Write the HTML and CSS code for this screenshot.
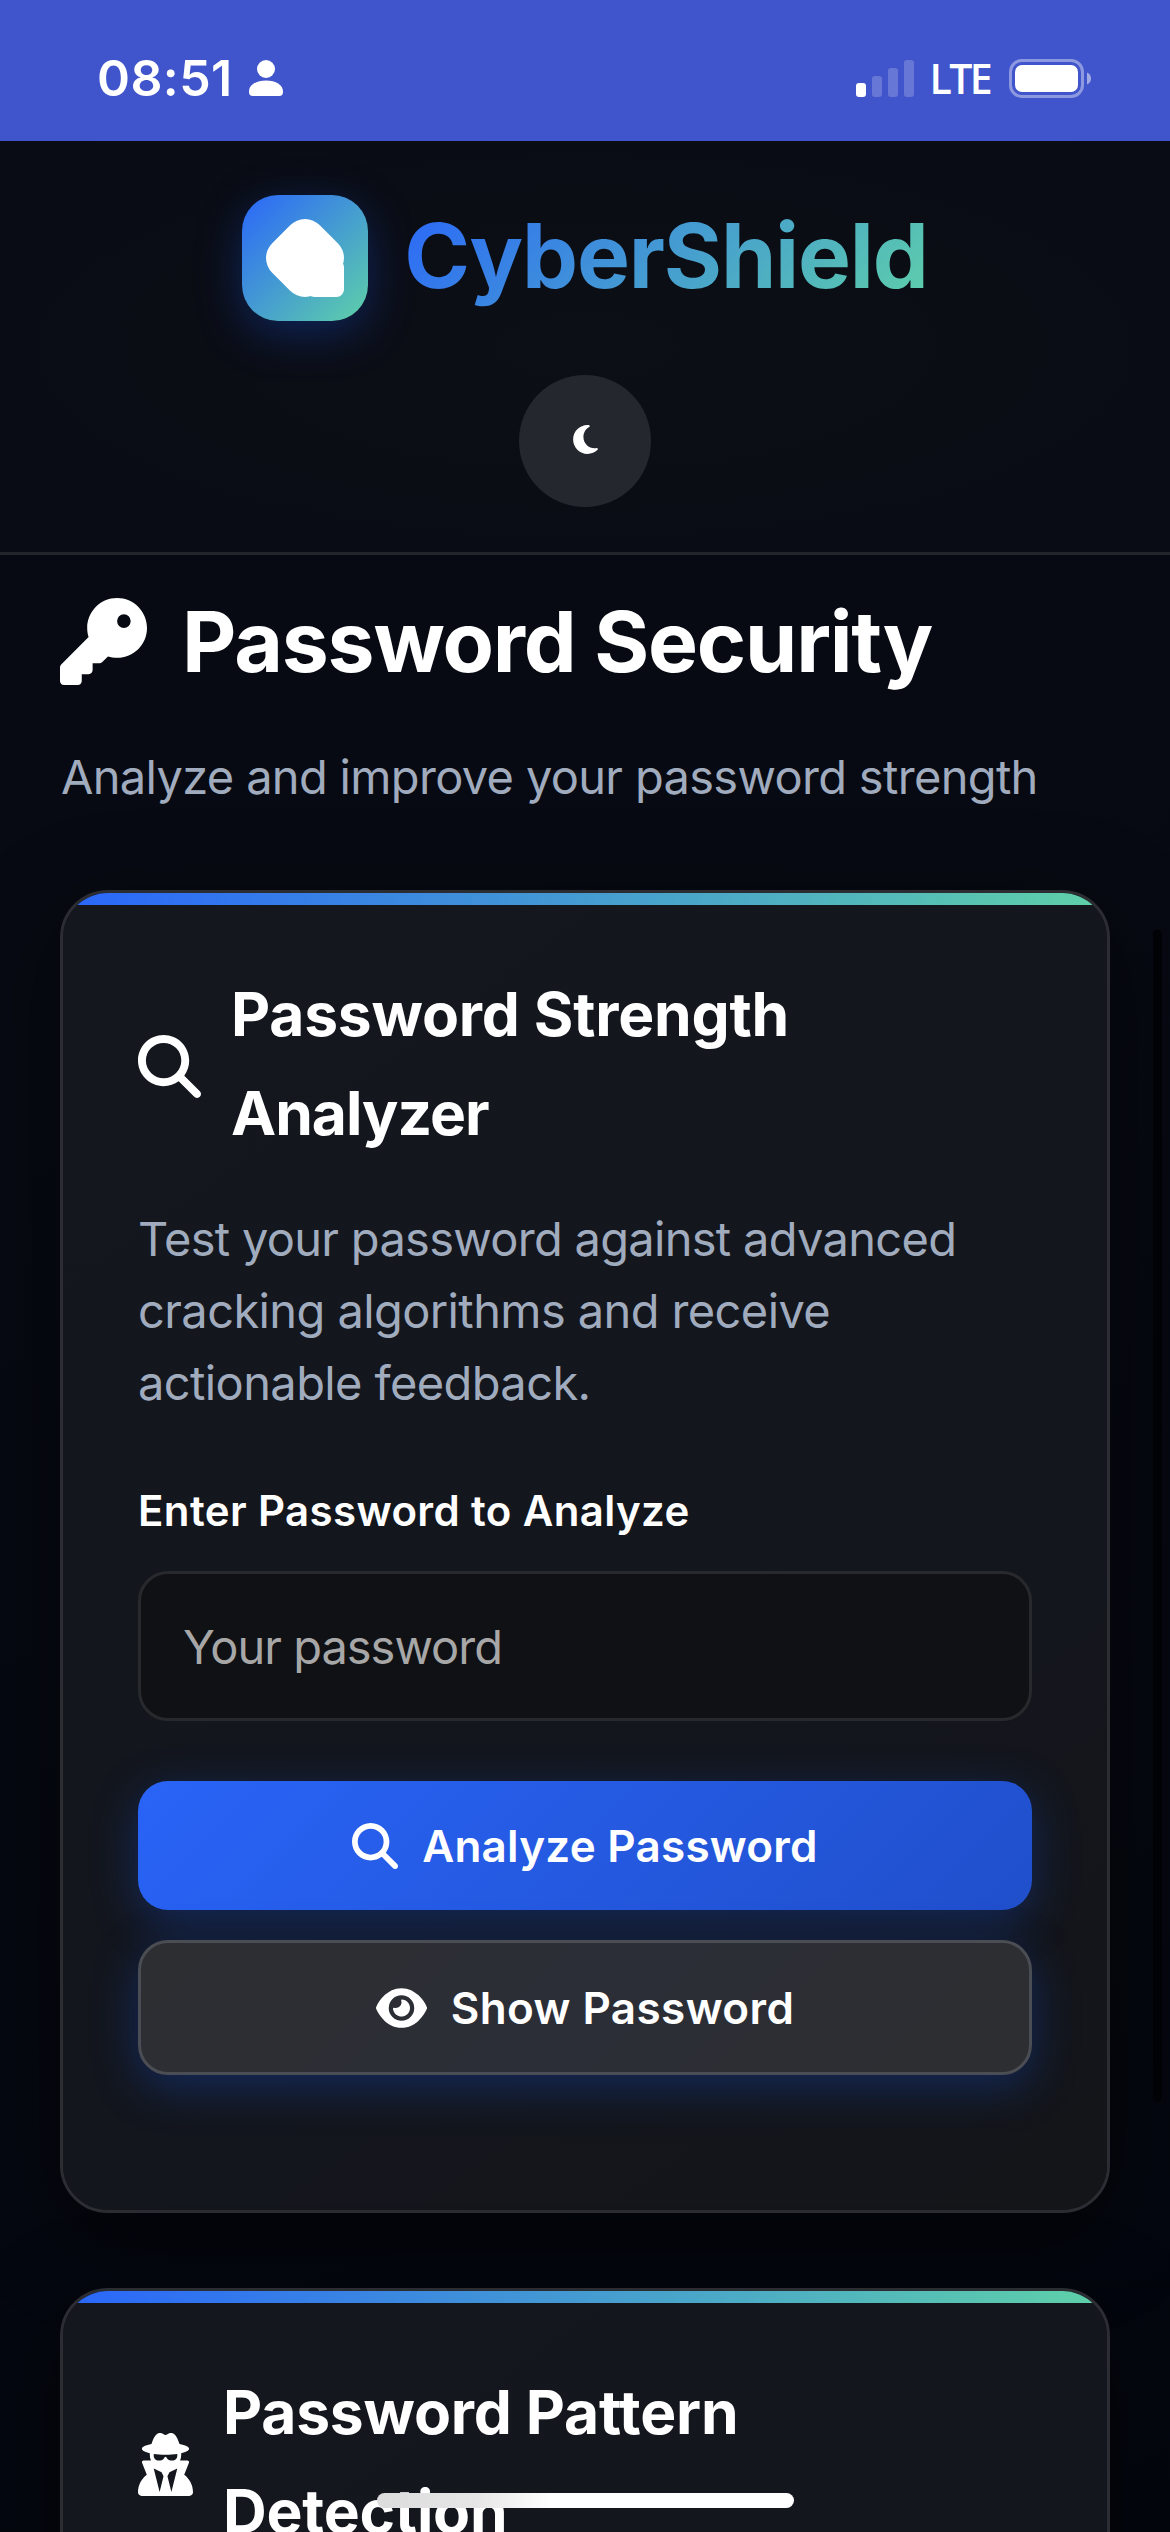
FILE: index.html
```html
<!DOCTYPE html>
<html lang="en">
<head>
<meta charset="utf-8">
<meta name="viewport" content="width=device-width, initial-scale=1">
<title>CyberShield</title>
<link rel="stylesheet" href="styles.css">
</head>
<body>
<div class="screen">
  <div class="status-bar">
    <div class="status-left">
      <span class="clock">08:51</span>
      <svg class="person" viewBox="0 0 34 36"><circle cx="17" cy="9" r="9"/><path d="M0 31.500C0 25 7 20.500 17 20.500S34 25 34 31.500C34 34.500 33 36 30 36H4C1 36 0 34.500 0 31.500Z"/></svg>
    </div>
    <div class="status-right">
      <svg class="signal" viewBox="0 0 58 37"><rect x="0" y="23" width="10" height="14" rx="3"/><g opacity=".2"><rect x="16" y="16" width="10" height="21" rx="3"/><rect x="32" y="8" width="10" height="29" rx="3"/><rect x="48" y="0" width="10" height="37" rx="3"/></g></svg>
      <span class="network">LTE</span>
      <svg class="battery" viewBox="0 0 82 39"><rect x="1.500" y="1.500" width="72" height="36" rx="11.500" fill="none" stroke="#fff" stroke-opacity=".4" stroke-width="3"/><rect x="6" y="6" width="63" height="27" rx="7"/><path d="M78 13.500C80.500 14.500 82 16.800 82 19.500S80.500 24.500 78 25.500Z" opacity=".5"/></svg>
    </div>
  </div>

  <header class="site-header">
    <div class="brand">
      <div class="brand-mark">
        <svg viewBox="0 0 126 126"><rect x="29.300" y="29.300" width="67.400" height="67.400" rx="21" transform="rotate(45 63 63)"/><rect x="65" y="65" width="37" height="37" rx="7.500"/></svg>
      </div>
      <span class="brand-name">CyberShield</span>
    </div>
    <button class="theme-toggle" aria-label="Toggle theme">
      <svg viewBox="0 0 384 512"><path d="M223.500 32C100 32 0 132.300 0 256S100 480 223.500 480c60.600 0 115.500-24.200 155.800-63.400c5-4.900 6.300-12.500 3.100-18.700s-10.100-9.700-17-8.500c-9.800 1.700-19.800 2.600-30.100 2.600c-96.900 0-175.500-78.800-175.500-176c0-65.800 36-123.100 89.300-153.300c6.100-3.500 9.200-10.500 7.700-17.300s-7.300-11.900-14.300-12.500c-6.300-.5-12.600-.8-19-.8z"/></svg>
    </button>
  </header>

  <main class="content">
    <h1 class="page-title">
      <svg viewBox="0 0 512 512"><path d="M336 352c97.200 0 176-78.800 176-176S433.200 0 336 0S160 78.800 160 176c0 18.700 2.900 36.800 8.300 53.700L7 391c-4.500 4.500-7 10.600-7 17v80c0 13.300 10.700 24 24 24h80c13.300 0 24-10.700 24-24V448h40c13.300 0 24-10.700 24-24V384h40c6.400 0 12.500-2.500 17-7l33.300-33.300c16.900 5.400 35 8.300 53.700 8.300zM376 96a40 40 0 1 1 0 80 40 40 0 1 1 0-80z"/></svg>
      <span>Password Security</span>
    </h1>
    <p class="page-subtitle">Analyze and improve your password strength</p>

    <section class="card">
      <h2 class="card-title">
        <svg class="icon-search" viewBox="0 0 512 512"><path d="M416 208c0 45.900-14.900 88.300-40 122.700L502.600 457.400c12.500 12.500 12.500 32.800 0 45.300s-32.800 12.500-45.300 0L330.700 376c-34.400 25.200-76.800 40-122.700 40C93.100 416 0 322.900 0 208S93.100 0 208 0S416 93.100 416 208zM208 352a144 144 0 1 0 0-288 144 144 0 1 0 0 288z"/></svg>
        <span>Password Strength<br><span class="tight">Analyzer</span></span>
      </h2>
      <p class="card-text">Test your password against advanced<br><span class="loose">cracking algorithms and receive<br>actionable feedback.</span></p>
      <label class="field-label" for="password">Enter Password to Analyze</label>
      <input class="field" id="password" type="password" placeholder="Your password">
      <button class="btn btn-primary">
        <svg class="btn-search" viewBox="0 0 512 512"><path d="M416 208c0 45.900-14.900 88.300-40 122.700L502.600 457.400c12.500 12.500 12.500 32.800 0 45.300s-32.800 12.500-45.300 0L330.700 376c-34.400 25.200-76.800 40-122.700 40C93.100 416 0 322.900 0 208S93.100 0 208 0S416 93.100 416 208zM208 352a144 144 0 1 0 0-288 144 144 0 1 0 0 288z"/></svg>
        <span>Analyze Password</span>
      </button>
      <button class="btn btn-secondary">
        <svg class="btn-eye" viewBox="0 0 576 512"><path d="M288 32c-80.800 0-145.500 36.800-192.600 80.600C48.600 156 17.300 208 2.500 243.700c-3.300 7.900-3.300 16.700 0 24.600C17.300 304 48.600 356 95.400 399.400C142.500 443.200 207.200 480 288 480s145.500-36.800 192.600-80.600c46.800-43.500 78.100-95.400 93-131.100c3.300-7.900 3.300-16.700 0-24.600c-14.900-35.700-46.200-87.700-93-131.100C433.500 68.800 368.800 32 288 32zM144 256a144 144 0 1 1 288 0 144 144 0 1 1 -288 0zm144-64c0 35.300-28.700 64-64 64c-7.100 0-13.900-1.200-20.300-3.300c-5.500-1.800-11.900 1.600-11.700 7.400c.3 6.900 1.300 13.800 3.200 20.700c13.700 51.200 66.400 81.600 117.600 67.900s81.600-66.400 67.900-117.600c-11.100-41.500-47.800-69.400-88.600-71.100c-5.800-.2-9.200 6.100-7.400 11.700c2.100 6.400 3.300 13.200 3.300 20.300z"/></svg>
        <span>Show Password</span>
      </button>
    </section>

    <section class="card">
      <h2 class="card-title">
        <svg class="icon-secret" viewBox="0 0 448 512"><path d="M224 16c-6.700 0-10.800-2.800-15.500-6.100C201.900 5.400 194 0 176 0c-30.500 0-52 43.700-66 89.400C62.700 98.100 32 112.200 32 128c0 14.300 25 27.100 64.600 35.900c-.4 4-.6 8-.6 12.100c0 17 3.300 33.200 9.300 48H45.400C38 224 32 230 32 237.400c0 1.700 .3 3.400 1 5l38.800 96.900C28.200 371.800 0 423.800 0 482.300C0 498.700 13.300 512 29.700 512H418.300c16.400 0 29.700-13.300 29.700-29.700c0-58.500-28.200-110.400-71.700-143L415 242.400c.6-1.600 1-3.300 1-5c0-7.400-6-13.400-13.400-13.400H342.700c6-14.800 9.300-31 9.300-48c0-4.100-.2-8.100-.6-12.100C391 155.100 416 142.300 416 128c0-15.800-30.700-29.900-78-38.600C324 43.700 302.500 0 272 0c-18 0-25.900 5.400-32.500 9.900c-4.800 3.300-8.800 6.100-15.500 6.100zm56 208H267.600c-16.500 0-31.100-10.600-36.300-26.200c-2.300-7-12.200-7-14.500 0c-5.200 15.600-19.900 26.200-36.300 26.200H168c-22.100 0-40-17.900-40-40V169.600c28.200 4.100 61 6.400 96 6.400s67.800-2.300 96-6.400V184c0 22.100-17.900 40-40 40zm-88 96l16 32L176 480 128 288l64 32zm128-32L272 480 240 352l16-32 64-32z"/></svg>
        <span>Password Pattern<br>Detection</span>
      </h2>
    </section>
  </main>

  <div class="scroll-thumb"></div>
  <div class="home-indicator"></div>
</div>
</body>
</html>
```

FILE: styles.css
```css
* {
  box-sizing: border-box;
  margin: 0;
}

body {
  font-family: Inter, "Liberation Sans", sans-serif;
  color: #fff;
  background: #04060c;
}

svg {
  display: block;
  flex: none;
  fill: currentColor;
}

button {
  font: inherit;
  color: inherit;
  border: 0;
}

.screen {
  position: relative;
  width: 1170px;
  height: 2532px;
  overflow: hidden;
  background: linear-gradient(160deg, #070a12 0%, #070a12 35%, #03060d 100%);
}

/* Device status bar */
.status-bar {
  display: flex;
  justify-content: space-between;
  height: 141px;
  padding: 0 79px 0 97px;
  background: #4055cb;
}

.status-left,
.status-right {
  display: flex;
  align-items: center;
  height: 156px;
}

.status-left {
  gap: 16px;
}

.clock {
  font-size: 50px;
  font-weight: 600;
  line-height: 60px;
  letter-spacing: 0.4px;
}

.person {
  width: 34px;
  height: 36px;
}

.signal {
  width: 58px;
  height: 37px;
  margin-right: 15px;
}

.network {
  font-family: "Open Sans", "Noto Sans", sans-serif;
  font-size: 41px;
  font-weight: 600;
  line-height: 60px;
  letter-spacing: -2.6px;
  margin-right: 19px;
}

.battery {
  width: 82px;
  height: 39px;
}

/* Header */
.site-header {
  display: flex;
  flex-direction: column;
  align-items: center;
  gap: 54px;
  height: 414px;
  padding-top: 54px;
  background: radial-gradient(ellipse at 50% 50%, #0d0f17 0%, #0b0d15 50%, #090c14 100%);
  border-bottom: 3px solid #23252d;
}

.brand {
  display: flex;
  align-items: center;
  gap: 36px;
}

.brand-mark {
  width: 126px;
  height: 126px;
  border-radius: 36px;
  background: linear-gradient(135deg, #2a66fa, #5fd1a8);
  box-shadow: 0 12px 45px rgba(20, 80, 220, 0.35);
}

.brand-name {
  font-size: 89px;
  font-weight: 700;
  line-height: 120px;
  letter-spacing: -1.2px;
  margin-top: -5px;
  background: linear-gradient(135deg, #2a66fa, #5fd1a8);
  background-clip: text;
  -webkit-background-clip: text;
  color: transparent;
}

.theme-toggle {
  display: flex;
  align-items: center;
  justify-content: center;
  width: 132px;
  height: 132px;
  padding: 0 0 3px;
  border-radius: 50%;
  background: #25272f;
}

.theme-toggle svg {
  width: 25px;
  height: 33px;
}

/* Page content */
.content {
  padding: 17px 60px 0;
}

.page-title {
  display: flex;
  align-items: center;
  gap: 35px;
  height: 138px;
  font-size: 84px;
  font-weight: 700;
  letter-spacing: -1.2px;
}

.page-title svg {
  width: 87px;
  height: 87px;
}

.page-subtitle {
  margin: 31px 0 77px;
  padding-left: 1px;
  font-size: 47px;
  line-height: 72px;
  letter-spacing: -0.67px;
  color: #a0abbe;
}

.card {
  position: relative;
  height: 1323px;
  margin-bottom: 75px;
  padding: 72px 75px 0;
  overflow: hidden;
  border: 3px solid #2b2d33;
  border-radius: 48px;
  background: linear-gradient(145deg, #14171e 0%, #13161d 60%, #131519 100%) padding-box;
  box-shadow: 0 24px 96px rgba(0, 0, 0, 0.4);
}

.card::before {
  content: "";
  position: absolute;
  inset: 0 0 auto;
  height: 12px;
  background: linear-gradient(90deg, #2a66fa, #5fd1a8);
}

.card-title {
  display: flex;
  align-items: center;
  gap: 30px;
  font-size: 60.5px;
  font-weight: 700;
  line-height: 99px;
  letter-spacing: -0.2px;
}

.tight {
  letter-spacing: -0.98px;
}

.card-title svg {
  margin-top: 5px;
}

.icon-search {
  width: 63px;
  height: 63px;
}

.icon-secret {
  width: 55px;
  height: 63px;
}

.card-text {
  margin-top: 40px;
  font-size: 47px;
  line-height: 72px;
  letter-spacing: -0.7px;
  color: #a0abbe;
}

.loose {
  letter-spacing: -0.6px;
}

.field-label {
  display: block;
  margin: 57px 0 26px;
  font-size: 42px;
  font-weight: 600;
  line-height: 69px;
  letter-spacing: 0.38px;
}

.field {
  display: block;
  width: 100%;
  height: 150px;
  padding: 0 42px;
  border: 3px solid #27292c;
  border-radius: 30px;
  background: #101115;
  color: #fff;
  font-family: inherit;
  font-size: 47px;
  letter-spacing: -1px;
}

.field::placeholder {
  color: #a7a7a7;
  opacity: 1;
}

.btn {
  display: flex;
  align-items: center;
  justify-content: center;
  gap: 24px;
  width: 100%;
  border-radius: 30px;
  font-size: 44px;
  font-weight: 600;
  box-shadow: 0 12px 45px rgba(22, 80, 210, 0.34);
}

.btn-primary {
  height: 129px;
  margin-top: 60px;
  letter-spacing: 0.24px;
  background: linear-gradient(135deg, #2964f7, #204fcb);
}

.btn-secondary {
  height: 135px;
  margin-top: 30px;
  letter-spacing: 0.4px;
  border: 3px solid #4a4d53;
  background: linear-gradient(135deg, #2d2e32, #2b2e36 50%, #2d2e31);
}

.btn-search {
  width: 46px;
  height: 46px;
}

.btn-eye {
  width: 51px;
  height: 46px;
}

/* Overlays above the page */
.scroll-thumb {
  position: absolute;
  top: 930px;
  right: 8px;
  width: 9px;
  height: 1172px;
  border-radius: 5px;
  background: #010205;
}

.home-indicator {
  position: absolute;
  left: 377px;
  bottom: 24px;
  width: 417px;
  height: 15px;
  border-radius: 8px;
  background: linear-gradient(90deg, #dcdcdc 0%, #e6e6e6 24%, #fff 42%);
}
```
